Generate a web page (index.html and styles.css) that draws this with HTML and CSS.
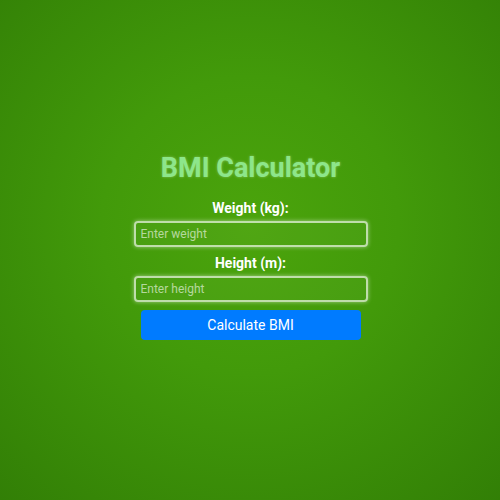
FILE: index.html
```html
<!DOCTYPE html>
<html>
<head>
<meta charset="utf-8">
<link rel="stylesheet" href="styles.css">
</head>
<body>
<div class="calc">
  <h1 class="title">BMI Calculator</h1>
  <label class="label" for="w">Weight (kg):</label>
  <input class="field" id="w" type="text" placeholder="Enter weight">
  <label class="label" for="h">Height (m):</label>
  <input class="field" id="h" type="text" placeholder="Enter height">
  <button class="btn">Calculate BMI</button>
</div>
</body>
</html>
```
FILE: styles.css
```css
html, body {
  margin: 0;
  height: 100%;
}
body {
  font-family: Roboto, "Liberation Sans", sans-serif;
  background: radial-gradient(circle at 50% 45%, #4ba40c 0%, #429a0a 40%, #327f06 100%);
  display: flex;
  align-items: center;
  justify-content: center;
}
.calc {
  width: 234px;
  display: flex;
  flex-direction: column;
  align-items: center;
  margin: 0 0 7px 1px;
}
.title {
  margin: 0 0 17px;
  font-size: 27px;
  line-height: 30px;
  font-weight: 700;
  color: #8de68a;
  text-shadow: 0 0 3px rgba(255, 255, 255, 0.35);
}
.label {
  font-size: 14px;
  line-height: 16px;
  font-weight: 700;
  color: #ffffff;
  margin-bottom: 5px;
}
.field {
  box-sizing: border-box;
  width: 234px;
  height: 26px;
  margin: 0 0 8px;
  padding: 0 5px;
  border: 2px solid rgba(255, 255, 255, 0.65);
  border-radius: 4px;
  background: rgba(255, 255, 255, 0.03);
  box-shadow: 0 0 4px rgba(255, 255, 255, 0.5);
  font-family: Roboto, "Liberation Sans", sans-serif;
  font-size: 12px;
  color: #ffffff;
  outline: none;
}
.field::placeholder {
  color: rgba(255, 255, 255, 0.6);
}
.btn {
  width: 220px;
  height: 30px;
  border: none;
  border-radius: 4px;
  background: #007bff;
  color: #ffffff;
  font-family: Roboto, "Liberation Sans", sans-serif;
  font-size: 14px;
  padding: 0;
}
```
